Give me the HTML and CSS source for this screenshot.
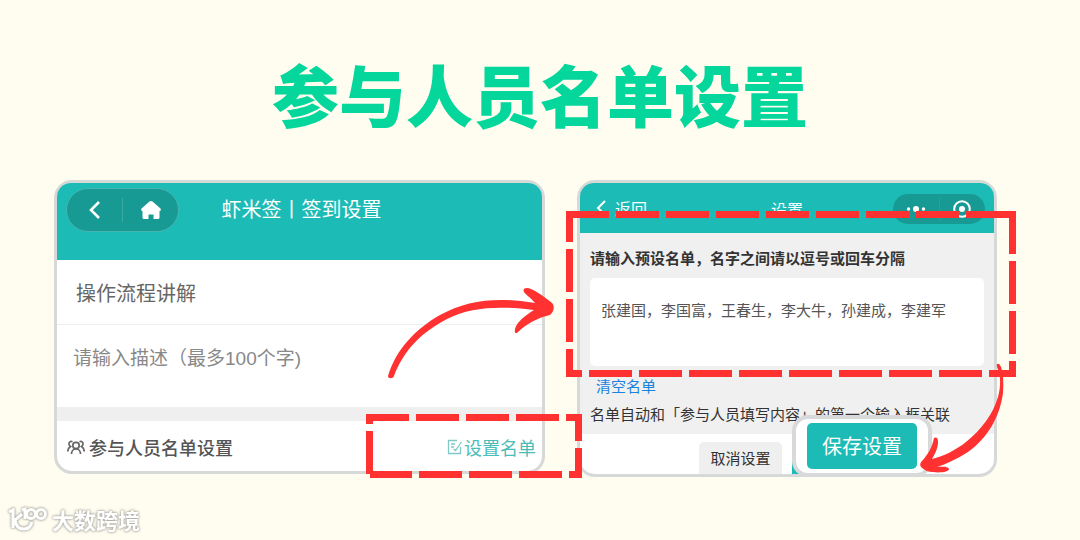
FILE: index.html
```html
<!DOCTYPE html>
<html lang="zh-CN">
<head>
<meta charset="utf-8">
<meta name="viewport" content="width=device-width, initial-scale=1">
<title>参与人员名单设置</title>
<link rel="stylesheet" href="styles.css">
</head>
<body>
<main class="stage">
  <h1 class="title">参与人员名单设置</h1>
  <div class="cards">
    <section class="card checkin">
      <header class="bar bar-tall">
        <nav class="pill pill-large">
          <button class="icon-btn" aria-label="后退"><svg width="20" height="22" viewBox="0 0 20 22"><path d="M14 3 6 11l8 8" fill="none" stroke="#fff" stroke-width="2.6"/></svg></button>
          <span class="pill-line"></span>
          <button class="icon-btn" aria-label="首页"><svg width="22" height="22" viewBox="0 0 22 22"><path d="M9.500 2.500Q11 1.500 12.500 2.500L20.500 9.500Q21.500 12 19.500 12V18.500Q19.500 20 18 20H13.500V15.500H8.500V20H4Q2.500 20 2.500 18.500V12Q.5 12 1.500 9.500Z" fill="#fff"/></svg></button>
        </nav>
        <h2 class="bar-title bar-title-large">虾米签丨签到设置</h2>
      </header>
      <input class="name-field" type="text" aria-label="活动名称" value="操作流程讲解">
      <textarea class="desc-field" aria-label="活动描述" placeholder="请输入描述（最多100个字)"></textarea>
      <div class="row">
        <svg width="18" height="15" viewBox="0 0 18 15" fill="none" stroke="#666" stroke-width="1.7"><circle cx="9" cy="5.500" r="3.200"/><path d="M4.500 14c0-3 2-5 4.500-5s4.500 2 4.500 5M5.500 1.800C3.500.8 1.800 2.200 2 4c.1 1.200.6 2 1.500 2.500C1.800 7.500.8 9 .8 11.500M12.500 1.800c2-1 3.700.4 3.500 2.200-.1 1.200-.6 2-1.500 2.500 1.700 1 2.700 2.500 2.700 5"/></svg>
        <span class="row-label">参与人员名单设置</span>
        <a class="row-link" href="#"><svg width="16" height="16" viewBox="0 0 16 16" fill="none" stroke="#7fcac6" stroke-width="1.300"><path d="M10 1.500H1.500v13h12V8M4 5h4M4 8h3M6.500 10l2 1.500L14.500 3"/></svg>设置名单</a>
      </div>
    </section>

    <section class="card roster">
      <header class="bar bar-short">
        <button class="back"><svg width="12" height="18" viewBox="0 0 12 18"><path d="M10 2 3 9l7 7" fill="none" stroke="#fff" stroke-width="2"/></svg>返回</button>
        <h2 class="bar-title">设置</h2>
        <nav class="pill pill-small">
          <button class="icon-btn" aria-label="更多"><svg width="20" height="18" viewBox="0 0 20 18" fill="#fff"><circle cx="2.500" cy="9" r="1.700"/><circle cx="10" cy="9" r="3"/><circle cx="17.500" cy="9" r="1.700"/></svg></button>
          <span class="pill-line"></span>
          <button class="icon-btn" aria-label="关闭"><svg width="18" height="18" viewBox="0 0 18 18"><circle cx="9" cy="9" r="7.800" fill="none" stroke="#fff" stroke-width="2"/><circle cx="9" cy="9" r="3" fill="#fff"/></svg></button>
        </nav>
      </header>
      <div class="roster-body">
        <label class="roster-label" for="names">请输入预设名单，名字之间请以逗号或回车分隔</label>
        <textarea class="names" id="names">张建国，李国富，王春生，李大牛，孙建成，李建军</textarea>
        <a class="clear" href="#">清空名单</a>
        <p class="note">名单自动和「参与人员填写内容」的第一个输入框关联</p>
      </div>
      <footer class="actions">
        <button class="cancel">取消设置</button>
        <span class="save-edge"></span>
      </footer>
      <div class="save-callout"><button class="save">保存设置</button></div>
    </section>
  </div>

  <svg class="marks" viewBox="0 0 1080 540" fill="none" stroke="#ff3131" aria-hidden="true">
    <g stroke-width="7" stroke-dasharray="43 7">
      <path d="M566 214.500H1008"/>
      <path d="M1012.500 211V377"/>
      <path d="M1016 373.500H566" stroke-dashoffset="16"/>
      <path d="M569.500 377V211" stroke-dashoffset="15"/>
      <path d="M366 417.500H582"/>
      <path d="M578.500 414V478" stroke-dashoffset="16"/>
      <path d="M582 474.500H370" stroke-dashoffset="30"/>
      <path d="M369.500 474V414"/>
    </g>
    <path d="M1007 214.500H1016" stroke-width="7"/>
    <g fill="#ff3131" stroke="none">
      <path d="M388 376C396 350 414 330 440 315C468 299 500 297 535 303C531 298 526 295 524 292C522 288 527 287 531 289C538 292 546 298 552 303C555 306 554 312 550 315C537 318 526 324 517 333C513 334 515 327 518 323C523 317 529 313 534 310C502 306 472 306 447 319C420 333 403 352 394 376C393 379 388 379 388 376Z"/>
      <path d="M997 367Q996 363 999 364C1003 367 1004 383 1003 393C1000 416 988 438 968 452C957 459 946 464 937 467C941 467 948 466 949 469C949 472 940 473 933 472C928 472 924 470 921 467Q919 464 922 461C928 454 932 448 934 438Q938 436 938 442C938 448 935 454 932 459C944 456 956 450 966 442C982 429 993 414 998 397C1001 386 1001 376 997 367Z"/>
    </g>
  </svg>

  <footer class="brand">
    <svg width="40" height="27" viewBox="0 0 40 27" fill="none" stroke="#fff" stroke-width="3"><path d="M1 6 5 4V22M14 8 7 14Q8 23 16 23 22 23 24 16M14 4 17 3V13"/><circle cx="23" cy="8" r="4.500"/><circle cx="33" cy="8" r="4.500"/></svg>
    <span>大数跨境</span>
  </footer>
</main>
</body>
</html>
```
FILE: styles.css
```css
* { box-sizing: border-box; }
body {
  margin: 0;
  background: #fffdf0;
  color: #333;
  font-family: "Noto Sans CJK SC", sans-serif;
  font-size: 15px;
  line-height: 24px;
}
button, input, textarea { font: inherit; color: inherit; border: 0; padding: 0; background: none; outline: 0; }
h1, h2, p { margin: 0; }
a { text-decoration: none; }
svg { flex: none; }

.stage { position: relative; display: flow-root; }
.title {
  margin-top: 53px;
  text-align: center;
  font-size: 67px;
  font-weight: 900;
  line-height: 80px;
  color: #04d69c;
}
.cards {
  display: grid;
  grid-template-columns: 491fr 420fr;
  align-items: start;
  gap: 32px;
  padding: 47px 83px 0 54px;
}
.card {
  position: relative;
  border: 3px solid #d6d9d7;
  border-radius: 18px;
  background: #fff;
}
.bar { position: relative; display: flex; background: #1dbbb5; color: #fff; border-radius: 14px 14px 0 0; }
.bar-tall { height: 77px; padding: 5px 9px; }
.bar-short { height: 50px; padding: 11px 9px 11px 11px; align-items: flex-start; justify-content: space-between; }
.bar-title {
  position: absolute;
  inset: 14px 0 auto;
  text-align: center;
  font-size: 16px;
  font-weight: 400;
  pointer-events: none;
}
.bar-title-large { padding-left: 4px; font-size: 20px; }
.pill { display: flex; align-items: center; background: #179a93; }
.pill-large { width: 113px; height: 44px; border: 1px solid #47b5af; border-radius: 22px; }
.pill-small { width: 92px; height: 30px; border-radius: 15px; }
.icon-btn { display: flex; flex: 1; justify-content: center; }
.pill-line { width: 1px; height: 24px; background: #3aaaa4; }
.pill-small .pill-line { background: #2aa09a; }
.back { display: flex; align-items: center; gap: 8px; padding: 2px 4px; font-size: 16px; }

.name-field { display: block; width: 100%; height: 65px; padding: 0 19px; border-bottom: 1px solid #eee; font-size: 20px; color: #666; }
.desc-field {
  display: block;
  width: 100%;
  height: 82px;
  padding: 22px 16px;
  resize: none;
  overflow: hidden;
  font-family: "Liberation Sans", "Noto Sans CJK SC", sans-serif;
  font-size: 19px;
}
.desc-field::placeholder { color: #888; opacity: 1; }
.row {
  display: flex;
  align-items: center;
  gap: 4px;
  height: 64px;
  padding: 2px 6px 0 10px;
  border-top: 14px solid #efefef;
  font-size: 18px;
}
.row-label { font-weight: 500; color: #555; }
.row-link { display: flex; align-items: center; gap: 1px; margin-left: auto; color: #4abdb8; }

.roster-body { padding: 13px 10px 8px; background: #f0f0f0; }
.roster-label { display: block; font-weight: 700; }
.names {
  display: block;
  width: 100%;
  height: 88px;
  margin-top: 8px;
  padding: 20px 11px;
  border-radius: 5px;
  background: #fff;
  color: #555;
  resize: none;
}
.clear { display: block; margin: 8px 6px 4px; color: #1a83dd; }
.note { white-space: nowrap; }
.actions { display: flex; align-items: flex-end; gap: 10px; height: 40px; padding-left: 119px; }
.cancel { width: 83px; height: 32px; border-radius: 5px 5px 0 0; background: #efefef; }
.save-edge { width: 16px; height: 12px; background: #1dbbb5; }
.save-callout {
  position: absolute;
  right: 62px;
  bottom: -3px;
  padding: 4px 11px;
  border: 4px solid #d8d9da;
  border-radius: 16px;
  background: #fff;
}
.save { display: block; width: 110px; height: 46px; border-radius: 5px; background: #1dbbb5; color: #fff; font-size: 20px; }

.marks { position: absolute; top: 0; left: 0; width: 100%; pointer-events: none; }
.brand {
  display: flex;
  align-items: center;
  gap: 4px;
  padding: 26px 8px 0;
  font-size: 22px;
  font-weight: 700;
  line-height: 32px;
  color: #fff;
  filter: drop-shadow(0 0 1px #aaa9a0) drop-shadow(0 0 1px #bbb9ae);
}
```
